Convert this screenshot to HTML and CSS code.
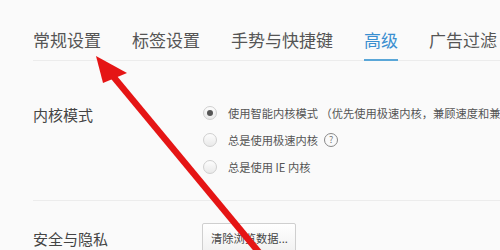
FILE: index.html
```html
<!DOCTYPE html>
<html>
<head>
	<meta charset="UTF-8">
	<title>设置</title>
	<link rel="stylesheet" href="styles.css">
</head>
<body>
	<div class="tabs">
		<div class="tab">常规设置</div>
		<div class="tab">标签设置</div>
		<div class="tab">手势与快捷键</div>
		<div class="tab active">高级</div>
		<div class="tab">广告过滤</div>
	</div>

	<div class="section">
		<div class="section-title">内核模式</div>
		<div class="options">
			<div class="option">
				<span class="radio checked"></span>
				<span>使用智能内核模式 （优先使用极速内核，兼顾速度和兼容性）</span>
			</div>
			<div class="option">
				<span class="radio"></span>
				<span>总是使用极速内核</span>
				<span class="help">?</span>
			</div>
			<div class="option">
				<span class="radio"></span>
				<span>总是使用 IE 内核</span>
			</div>
		</div>
	</div>

	<div class="section section-privacy">
		<div class="section-title">安全与隐私</div>
		<div class="options">
			<button class="btn">清除浏览数据...</button>
		</div>
	</div>

	<!-- annotation arrow drawn over the screenshot -->
	<svg class="arrow" viewBox="0 0 500 250" width="500" height="250">
		<line x1="112" y1="75" x2="272" y2="268" stroke="#e51515" stroke-width="6.5"/>
		<polygon points="96,56 127,73 103,83" fill="#e51515"/>
	</svg>
</body>
</html>
```

FILE: styles.css
```css
body {
	margin: 0;
	width: 500px;
	height: 250px;
	overflow: hidden;
	background: #fafafa;
	font-family: "Noto Sans CJK SC", "Noto Sans", sans-serif;
	color: #555;
	position: relative;
}

.tabs {
	display: flex;
	gap: 31px;
	margin-left: 33px;
	padding-top: 28px;
	border-bottom: 1px solid #ececec;
	white-space: nowrap;
}

.tab {
	font-size: 17px;
	line-height: 24px;
	padding-bottom: 7px;
	border-bottom: 2px solid transparent;
	color: #555;
	margin-bottom: -1px;
}

.tab.active {
	color: #3a8fd0;
	border-bottom-color: #5aa7d8;
}

.section {
	display: flex;
	margin-left: 33px;
	padding: 38px 0 20px;
	border-bottom: 1px solid #ececec;
}

.section-title {
	width: 170px;
	flex-shrink: 0;
	font-size: 15px;
	line-height: 28px;
	color: #444;
	padding-top: 2px;
}

.options {
	display: flex;
	flex-direction: column;
	white-space: nowrap;
}

.option {
	display: flex;
	align-items: center;
	gap: 11px;
	height: 27px;
	font-size: 11.25px;
	color: #555;
}

.radio {
	width: 12px;
	height: 12px;
	border-radius: 50%;
	border: 1px solid #cfcfcf;
	background: linear-gradient(#fdfdfd, #e9e9e9);
	position: relative;
	flex-shrink: 0;
}

.radio.checked::after {
	content: "";
	position: absolute;
	left: 3px;
	top: 3px;
	width: 6px;
	height: 6px;
	border-radius: 50%;
	background: #555;
}

.help {
	width: 12px;
	height: 12px;
	border-radius: 50%;
	border: 1px solid #888;
	font-size: 9px;
	line-height: 12px;
	text-align: center;
	color: #777;
	margin-left: -5px;
}

.section-privacy {
	padding-top: 22px;
	align-items: center;
}

.btn {
	font-family: inherit;
	font-size: 11.25px;
	color: #444;
	height: 30px;
	width: 94px;
	padding: 0 8px;
	text-align: left;
	border: 1px solid #cfcfcf;
	border-radius: 2px;
	background: linear-gradient(#fff, #f1f1f1);
	margin-left: -1px;
}

.arrow {
	position: absolute;
	left: 0;
	top: 0;
	pointer-events: none;
}
```
